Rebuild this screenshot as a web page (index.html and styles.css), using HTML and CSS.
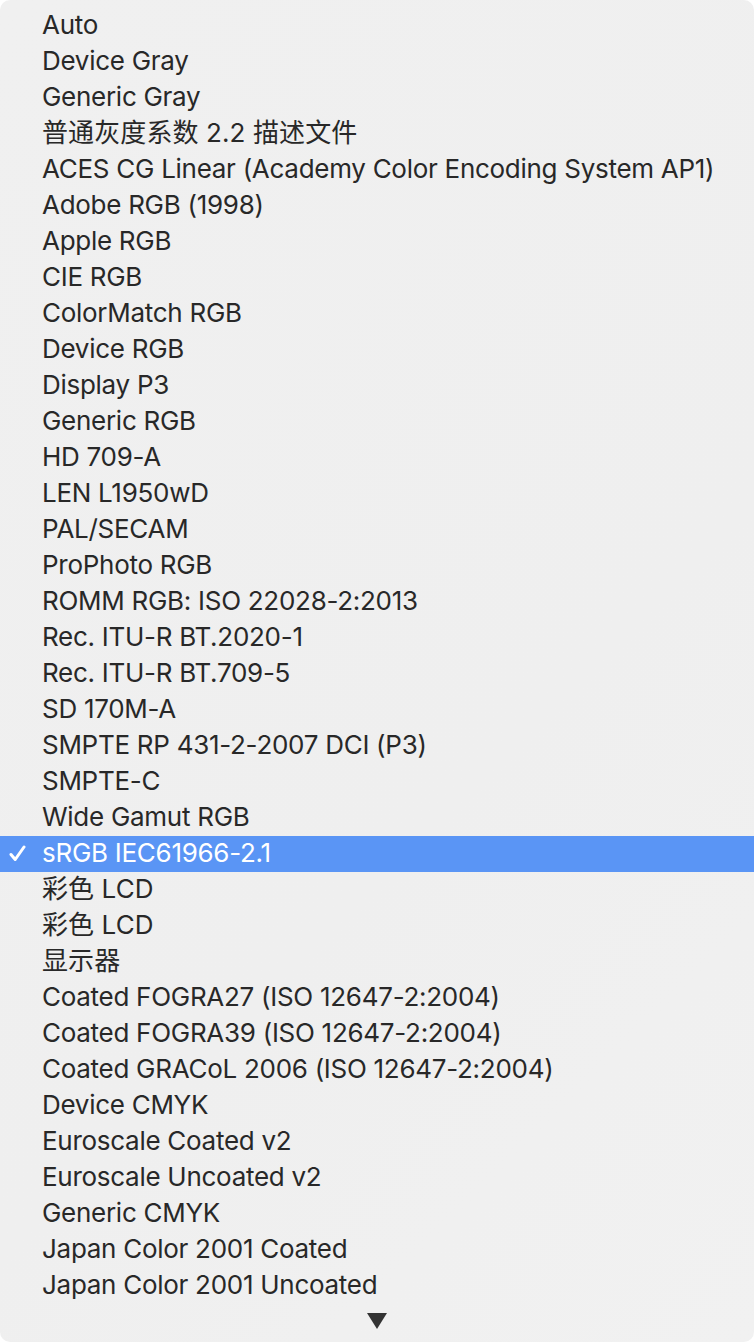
FILE: index.html
```html
<!DOCTYPE html>
<html lang="en">
<head>
<meta charset="utf-8">
<link rel="stylesheet" href="styles.css">
</head>
<body>
<div class="menu">
  <ul class="items">
    <li class="item">Auto</li>
    <li class="item">Device Gray</li>
    <li class="item">Generic Gray</li>
    <li class="item cjk">普通灰度系数 2.2 描述文件</li>
    <li class="item">ACES CG Linear (Academy Color Encoding System AP1)</li>
    <li class="item">Adobe RGB (1998)</li>
    <li class="item">Apple RGB</li>
    <li class="item">CIE RGB</li>
    <li class="item">ColorMatch RGB</li>
    <li class="item">Device RGB</li>
    <li class="item">Display P3</li>
    <li class="item">Generic RGB</li>
    <li class="item">HD 709-A</li>
    <li class="item">LEN L1950wD</li>
    <li class="item">PAL/SECAM</li>
    <li class="item">ProPhoto RGB</li>
    <li class="item">ROMM RGB: ISO 22028-2:2013</li>
    <li class="item">Rec. ITU-R BT.2020-1</li>
    <li class="item">Rec. ITU-R BT.709-5</li>
    <li class="item">SD 170M-A</li>
    <li class="item">SMPTE RP 431-2-2007 DCI (P3)</li>
    <li class="item">SMPTE-C</li>
    <li class="item">Wide Gamut RGB</li>
    <li class="item selected"><svg class="check" viewBox="0 0 17 17" width="17" height="17"><path d="M2 9.5 L6.2 14.5 L15 2" fill="none" stroke="#fff" stroke-width="3" stroke-linecap="round" stroke-linejoin="round"/></svg>sRGB IEC61966-2.1</li>
    <li class="item cjk">彩色 LCD</li>
    <li class="item cjk">彩色 LCD</li>
    <li class="item cjk">显示器</li>
    <li class="item">Coated FOGRA27 (ISO 12647-2:2004)</li>
    <li class="item">Coated FOGRA39 (ISO 12647-2:2004)</li>
    <li class="item">Coated GRACoL 2006 (ISO 12647-2:2004)</li>
    <li class="item">Device CMYK</li>
    <li class="item">Euroscale Coated v2</li>
    <li class="item">Euroscale Uncoated v2</li>
    <li class="item">Generic CMYK</li>
    <li class="item">Japan Color 2001 Coated</li>
    <li class="item">Japan Color 2001 Uncoated</li>
  </ul>
  <div class="scroll-arrow">
    <svg viewBox="0 0 20 16" width="20" height="16"><path d="M0 0 H20 L10 16 Z" fill="#333"/></svg>
  </div>
</div>
</body>
</html>
```
FILE: styles.css
```css
html, body {
  margin: 0;
  padding: 0;
  background: #ffffff;
}
.menu {
  width: 754px;
  height: 1342px;
  box-sizing: border-box;
  background: linear-gradient(135deg, #f0f0f0 0%, #efefef 60%, #f1f1f1 100%);
  border-radius: 10px;
  padding-top: 8px;
  font-family: "Inter", "Noto Sans CJK SC", sans-serif;
  font-size: 26px;
  letter-spacing: -0.28px;
  color: #282828;
  overflow: hidden;
  display: flex;
  flex-direction: column;
}
.items {
  list-style: none;
  margin: 0;
  padding: 0;
}
.item {
  position: relative;
  height: 36px;
  line-height: 34px;
  padding-left: 42px;
  white-space: nowrap;
}
.item.cjk {
  letter-spacing: 0.1px;
}
.item.selected {
  background: #5a95f5;
  color: #ffffff;
}
.check {
  position: absolute;
  left: 9px;
  top: 9px;
}
.scroll-arrow {
  display: flex;
  justify-content: center;
  padding-top: 9px;
}
.scroll-arrow svg {
  display: block;
}
```
